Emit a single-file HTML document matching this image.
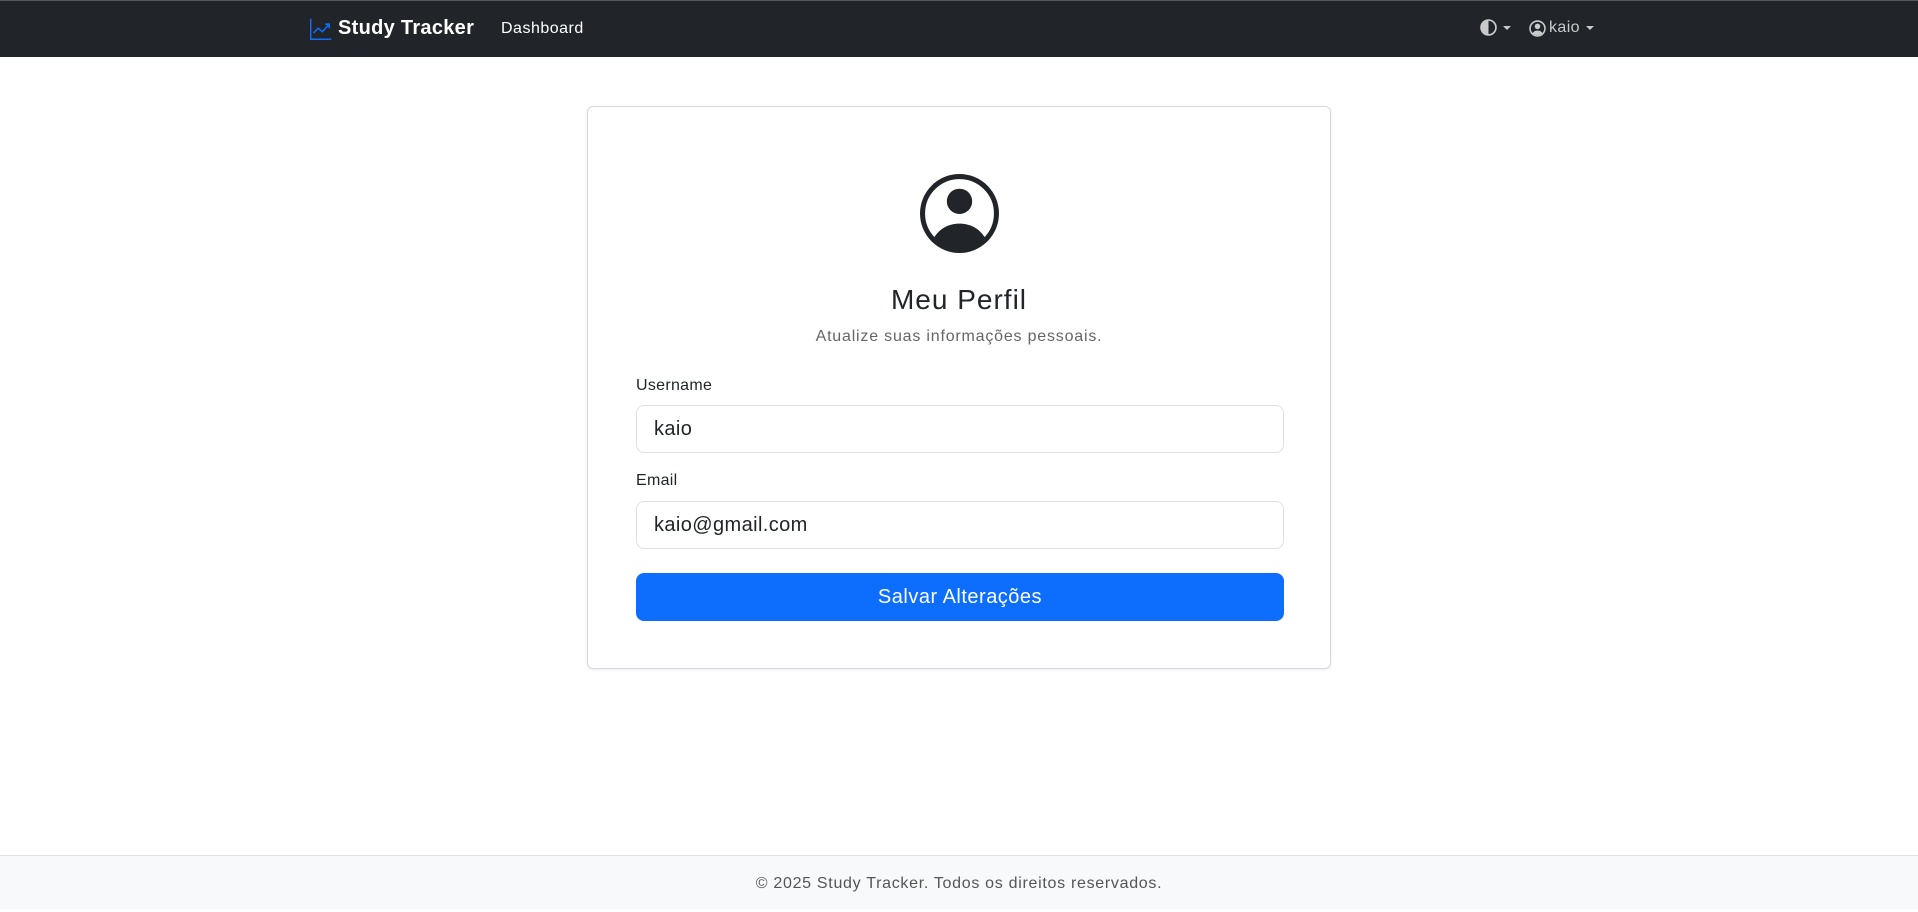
<!DOCTYPE html>
<html><head><meta charset="utf-8"><style>
*{box-sizing:border-box;margin:0;padding:0}
body{width:1918px;height:909px;position:relative;font-family:"Liberation Sans",sans-serif;background:#fff;color:#212529;overflow:hidden}
.nav{position:absolute;left:0;top:0;width:1918px;height:57px;background:#212529;border-top:1px solid #555}
.brand{position:absolute;left:310px;top:16px;color:#fff;font-weight:bold;font-size:20px;display:flex;align-items:center;gap:6px;letter-spacing:0.3px}
.dash{position:absolute;left:501px;top:19px;color:#fff;font-size:16px;letter-spacing:0.5px}
.right{position:absolute;top:18px;color:#c8cacc;font-size:16px;display:flex;align-items:center}
.caret{display:inline-block;width:0;height:0;border-left:4px solid transparent;border-right:4px solid transparent;border-top:4px solid #c8cacc;margin-left:6px}
.card{position:absolute;left:587px;top:106px;width:744px;height:563px;border:1px solid #d6d8db;border-radius:6px;box-shadow:0 1px 3px rgba(0,0,0,.08)}
.c{position:absolute;left:0;width:100%;text-align:center}
.lbl{position:absolute;left:48px;font-size:16px;letter-spacing:0.3px}
.inp{position:absolute;left:48px;width:648px;height:48px;border:1px solid #dee2e6;border-radius:8px;font-size:20px;padding:12px 17px;letter-spacing:0.4px}
.btn{position:absolute;left:48px;top:466px;width:648px;height:48px;background:#0d6efd;border-radius:8px;color:#fff;font-size:20px;text-align:center;line-height:49px;letter-spacing:0.5px}
.foot{position:absolute;left:0;top:855px;width:1918px;height:54px;background:#f8f9fa;border-top:1px solid #dee2e6;text-align:center;font-size:16px;color:#555;line-height:56px;letter-spacing:0.7px}
</style></head><body>
<div class="nav">
<div class="brand"><svg width="22" height="22" viewBox="0 0 16 16" fill="none" stroke="#0d6efd" stroke-width="1.1"><path d="M0.5 0.5V15.5H15.5"/><path d="M2.5 11L6 7.5L9 10L14 4.5M11 4.5H14V7.5"/></svg>Study Tracker</div>
<div class="dash">Dashboard</div>
<div class="right" style="left:1480px"><svg width="17" height="17" viewBox="0 0 16 16"><circle cx="8" cy="8" r="7" fill="none" stroke="#c8cacc" stroke-width="1.6"/><path d="M8 1a7 7 0 0 0 0 14z" fill="#c8cacc"/></svg><span class="caret"></span></div>
<div class="right" style="left:1529px"><svg width="17" height="17" viewBox="0 0 16 16"><circle cx="8" cy="8" r="7" fill="none" stroke="#c8cacc" stroke-width="1.5"/><circle cx="8" cy="6" r="2.6" fill="#c8cacc"/><path d="M3.3 12.5C4.5 10.5 6 10 8 10s3.5.5 4.7 2.5A7 7 0 0 1 3.3 12.5z" fill="#c8cacc"/></svg><span style="margin-left:3px;letter-spacing:0.4px">kaio</span><span class="caret"></span></div>
</div>
<div class="card">
<svg style="position:absolute;left:331px;top:66px" width="81" height="81" viewBox="0 0 16 16"><circle cx="8" cy="8" r="7.3" fill="none" stroke="#212529" stroke-width="1"/><circle cx="8" cy="5.6" r="2.5" fill="#212529"/><path d="M2.9 12.9C4 11 5.8 10 8 10s4 1 5.1 2.9A7.3 7.3 0 0 1 2.9 12.9z" fill="#212529"/></svg>
<div class="c" style="top:177px;font-size:28px;letter-spacing:1px">Meu Perfil</div>
<div class="c" style="top:221px;font-size:16px;color:#666;letter-spacing:0.8px">Atualize suas informações pessoais.</div>
<div class="lbl" style="top:270px">Username</div>
<div class="inp" style="top:298px">kaio</div>
<div class="lbl" style="top:365px">Email</div>
<div class="inp" style="top:394px">kaio@gmail.com</div>
<div class="btn">Salvar Alterações</div>
</div>
<div class="foot">© 2025 Study Tracker. Todos os direitos reservados.</div>
</body></html>
